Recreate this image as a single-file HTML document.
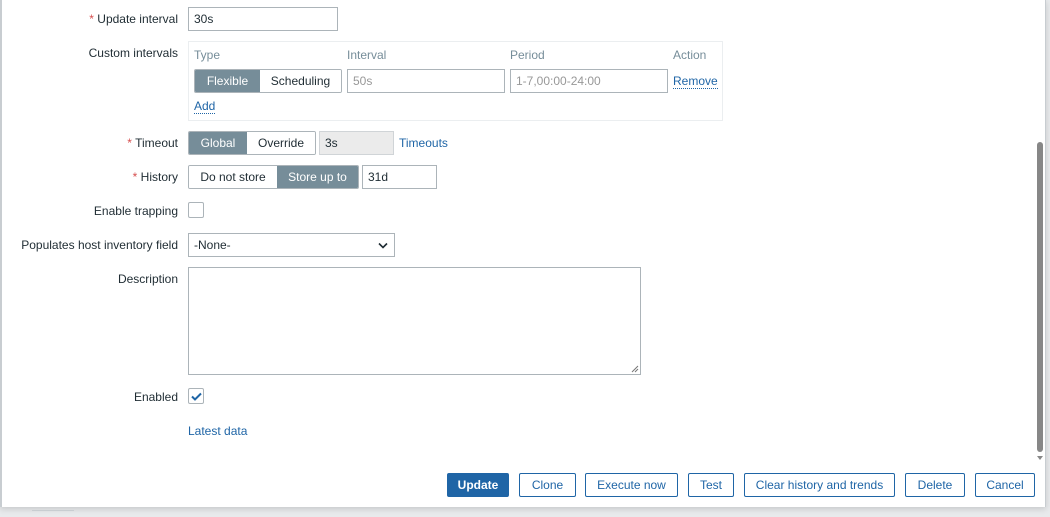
<!DOCTYPE html>
<html><head><meta charset="utf-8"><style>
*{box-sizing:border-box;margin:0;padding:0}
body{width:1050px;height:517px;background:#e8eaec;font-family:"Liberation Sans",Arial,sans-serif;font-size:12px;color:#1f2c33;position:relative;overflow:hidden}
.dlg{position:absolute;left:0;top:0;width:1046px;height:507px;background:#fff;border-left:2px solid #c8cdd1;border-right:1px solid #c8cdd1;box-shadow:0 2px 6px rgba(0,0,0,.15)}
.a{position:absolute}
.lbl{position:absolute;right:872px;text-align:right;white-space:nowrap}
.req:before{content:"* ";color:#d64e4e}
.inp{position:absolute;border:1px solid #acb4b9;background:#fff;height:24px;line-height:22px;padding-left:5px}
.ph{color:#989898}
.seg{position:absolute;display:flex;height:24px;border:1px solid #acb4b9;border-radius:2px;overflow:hidden}
.seg div{line-height:22px;text-align:center;background:#fff}
.seg .on{background:#768d99;color:#fff}
.lnk{color:#1f65a6}
.dot{border-bottom:1px dotted #1f65a6}
.btn{position:absolute;top:473px;height:24px;border:1px solid #1f65a6;border-radius:2px;color:#1f65a6;line-height:22px;text-align:center;background:#fff}
.cb{position:absolute;width:16px;height:16px;border:1px solid #acb4b9;border-radius:2px;background:#fff}
</style></head><body>
<div class="dlg"></div>
<div class="lbl req" style="top:12px">Update interval</div>
<div class="inp" style="left:188px;top:7px;width:150px">30s</div>
<div class="lbl" style="top:46px">Custom intervals</div>
<div class="a" style="left:188px;top:41px;width:535px;height:80px;border:1px solid #ebeef0"></div>
<div class="a" style="left:194px;top:48px;color:#768d99">Type</div>
<div class="a" style="left:347px;top:48px;color:#768d99">Interval</div>
<div class="a" style="left:510px;top:48px;color:#768d99">Period</div>
<div class="a" style="left:673px;top:48px;color:#768d99">Action</div>
<div class="seg" style="left:194px;top:69px;width:148px"><div class="on" style="width:65px">Flexible</div><div style="flex:1">Scheduling</div></div>
<div class="inp ph" style="left:347px;top:69px;width:158px">50s</div>
<div class="inp ph" style="left:510px;top:69px;width:158px">1-7,00:00-24:00</div>
<div class="a lnk dot" style="left:673px;top:74px">Remove</div>
<div class="a lnk dot" style="left:194px;top:99px">Add</div>
<div class="lbl req" style="top:136px">Timeout</div>
<div class="seg" style="left:188px;top:131px;width:128px"><div class="on" style="width:58px">Global</div><div style="flex:1">Override</div></div>
<div class="inp" style="left:319px;top:131px;width:75px;background:#ebebeb;border-color:#d0d4d7">3s</div>
<div class="a lnk" style="left:399px;top:136px">Timeouts</div>
<div class="lbl req" style="top:170px">History</div>
<div class="seg" style="left:188px;top:165px;width:171px"><div style="width:88px">Do not store</div><div class="on" style="flex:1">Store up to</div></div>
<div class="inp" style="left:362px;top:165px;width:75px">31d</div>
<div class="lbl" style="top:204px">Enable trapping</div>
<div class="cb" style="left:188px;top:202px"></div>
<div class="lbl" style="top:238px">Populates host inventory field</div>
<div class="inp" style="left:188px;top:233px;width:207px">-None-<svg class="a" style="right:6px;top:8px" width="10" height="7" viewBox="0 0 10 7"><path d="M1 1.5L5 5.5 9 1.5" stroke="#1f2c33" stroke-width="1.6" fill="none"/></svg></div>
<div class="lbl" style="top:272px">Description</div>
<div class="a" style="left:188px;top:267px;width:453px;height:108px;border:1px solid #acb4b9"><svg class="a" style="right:1px;bottom:1px" width="8" height="8"><path d="M1 7L7 1M4 7L7 4" stroke="#777" stroke-width="1"/></svg></div>
<div class="lbl" style="top:390px">Enabled</div>
<div class="cb" style="left:188px;top:388px"><svg class="a" style="left:2px;top:3px" width="11" height="9"><path d="M1 4.5L4 7.5 10 1.5" stroke="#1f65a6" stroke-width="2" fill="none"/></svg></div>
<div class="a lnk" style="left:188px;top:424px">Latest data</div>
<div class="btn" style="left:447px;width:62px;background:#1f65a6;color:#fff;font-weight:bold">Update</div>
<div class="btn" style="left:519px;width:57px">Clone</div>
<div class="btn" style="left:585px;width:93px">Execute now</div>
<div class="btn" style="left:688px;width:46px">Test</div>
<div class="btn" style="left:744px;width:151px">Clear history and trends</div>
<div class="btn" style="left:905px;width:60px">Delete</div>
<div class="btn" style="left:975px;width:60px">Cancel</div>
<div class="a" style="left:1037px;top:142px;width:6px;height:310px;background:#878787;border-radius:3px"></div>
<div class="a" style="left:1037px;top:456px;width:0;height:0;border-left:3px solid transparent;border-right:3px solid transparent;border-top:4px solid #878787"></div>
<div class="a" style="left:32px;top:510px;width:42px;height:1px;background:#c8cdd1"></div>
</body></html>
